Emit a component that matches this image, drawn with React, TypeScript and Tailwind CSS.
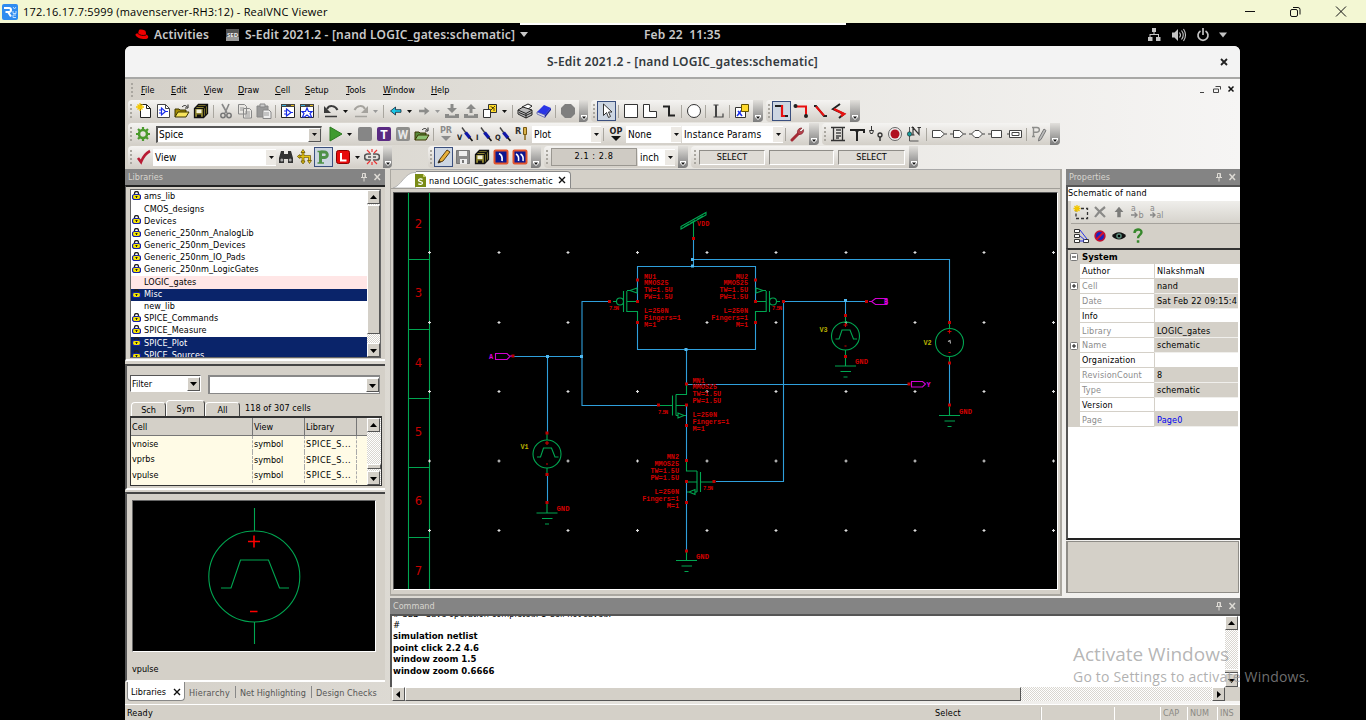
import React from 'react';

type Kids = { children?: React.ReactNode };

/* ---------- small building blocks ---------- */

const Ico = ({ children, s = 16 }: Kids & { s?: number }) => (
  <svg width={s} height={s} viewBox="0 0 16 16" fill="none" className="shrink-0">
    {children}
  </svg>
);

const Btn = ({ children, on = false }: Kids & { on?: boolean }) => (
  <div
    className={
      'flex w-[19px] shrink-0 items-center justify-center ' +
      (on ? 'h-[20px] border border-[#3a4f7e] bg-[#cdd6e2]' : 'h-[20px]')
    }
  >
    {children}
  </div>
);

const Sep = ({ w = 'w-[5px]' }: { w?: string }) => (
  <div className={'flex h-[13px] shrink-0 justify-center ' + w}>
    <div className="w-px bg-[#a9a69f]" />
  </div>
);

const Gap = ({ w }: { w: string }) => <div className={'shrink-0 ' + w} />;

const Down = ({ w = 'w-[11px]', c = '#111' }: { w?: string; c?: string }) => (
  <div className={'flex shrink-0 justify-center ' + w}>
    <svg width="5" height="3" viewBox="0 0 5 3"><path d="M0 0h5L2.500 3z" fill={c} /></svg>
  </div>
);

const Grip = ({ w = 'w-[6px]' }: { w?: string }) => (
  <div className={'flex h-[14px] shrink-0 flex-col items-center justify-between ' + w}>
    {[0, 1, 2, 3].map((i) => <i key={i} className="h-[2px] w-[2px] bg-[#aaa7a0]" />)}
  </div>
);

const More = ({ w = 'w-[10px]' }: { w?: string }) => (
  <div className={'flex h-[22px] shrink-0 items-end justify-center self-end rounded-br bg-gradient-to-b from-[#e2e0dc] to-[#7c7c7c] pb-[2px] ' + w}>
    <svg width="6" height="5" viewBox="0 0 6 5"><path d="M0 0h6v2L3 5 0 2z" fill="#fff" /><path d="M1 1.500h4L3 4z" fill="#111" /></svg>
  </div>
);

const Bar = ({ children }: Kids) => (
  <div className="flex h-[22px] shrink-0 items-center rounded-sm bg-gradient-to-b from-[#f5f4f2] to-[#d3cfc8]">{children}</div>
);

const FlatCombo = ({ w, t, track = '' }: { w: string; t: string; track?: string }) => (
  <div className={'flex h-[17px] shrink-0 items-center bg-white pl-[2px] text-[10px] ' + w}>
    <span className={'grow whitespace-nowrap ' + track}>{t}</span>
    <div className="flex h-[15px] w-[10px] shrink-0 items-center justify-center bg-[#ece9e4]"><Down w="w-[5px]" /></div>
  </div>
);

const Arrow = ({ d }: { d: 'up' | 'down' | 'left' | 'right' }) => {
  const p = { up: 'M0 5h7L3.500 1z', down: 'M0 2h7L3.500 6z', left: 'M5 0v7L1 3.500z', right: 'M2 0v7L6 3.500z' }[d];
  return (
    <div className="flex h-[14px] w-[13px] shrink-0 items-center justify-center border border-t-white border-r-[#555] border-b-[#555] border-l-white bg-[#d4d0c8]">
      <svg width="7" height="7" viewBox="0 0 7 7"><path d={p} fill="#000" /></svg>
    </div>
  );
};

const dither =
  'bg-[repeating-conic-gradient(#fff_0_25%,#d9d6d0_0_50%)] bg-[length:2px_2px]';

const PanelTitle = ({ t }: { t: string }) => (
  <div className="flex h-[16px] shrink-0 items-center bg-[#848484] pl-[3px] text-[9px] text-[#d8d5cf]">
    <span className="grow pt-[2px]">{t}</span>
    <svg width="8" height="10" viewBox="0 0 8 10" className="mr-[5px]"><path d="M2.500 1.500h3v4h-3zM1 5.500h6M4 6v3.500M5 1.500v4" stroke="#dedbd5" fill="none" /></svg>
    <svg width="9" height="8" viewBox="0 0 9 8" className="mr-[3px]"><path d="M1.500 1l5.500 6M7 1L1.500 7" stroke="#dedbd5" strokeWidth="1.500" /></svg>
  </div>
);

/* ---------- toolbar icons ---------- */

const Pen = ({ l }: { l: string }) => (
  <Ico>
    <path d="M5 1.500l5 7" stroke="#444" strokeWidth="1.400" /><path d="M8.500 6.500l4.500 5.500" stroke="#1018a8" strokeWidth="3.400" />
    <path d="M12.500 11.500l3 3.500" stroke="#111" strokeWidth="1.600" />
    <text x="0" y="14" fontSize="7.500" fontWeight="700" fill="#222">{l}</text>
  </Ico>
);
const Folder = ({ a = '#f7e45b', b = '#a38b00' }: { a?: string; b?: string }) => (
  <Ico>
    <path d="M1 14V6h4l1 1h6v2" fill={b} stroke="#3a3500" /><path d="M1 14l3-5h11l-3 5z" fill={a} stroke="#3a3500" />
    <path d="M8 4c2-2 4-2 5 0M14 1.500V5h-3" stroke="#222" />
  </Ico>
);
const Stack = () => (
  <Ico>
    <path d="M5.500 1.500h9v9l-4 4h-9v-9z" fill="#8f8630" stroke="#111" strokeWidth="1.300" />
    <path d="M3.500 3.500h9v9M1.500 5.500h9v9M12.500 3.500l2-2M10.500 5.500l2-2" stroke="#111" strokeWidth="1.200" />
    <path d="M3.500 6.500h5V10h-5z" fill="#f3f1dc" /><path d="M4 11.500h4v2.500H4z" fill="#111" />
  </Ico>
);
const Win = ({ star = false }: { star?: boolean }) => (
  <Ico>
    <path d="M1.500 1.500h13v13h-13z" fill="#fff" stroke="#222" /><path d="M1 1h14v3H1z" fill="#444" /><path d="M2 2h4v1H2z" fill="#3ab0d8" /><path d="M11 2h3v1h-3z" fill="#e8c020" />
    {star ? <path d="M8 5l1.500 3.500h3.500L11 10.500l1.500 3.500h-2L8 12l-2.500 2h-2L5 10.500 3 8.500h3.500z" stroke="#1a2ee8" strokeWidth="1.200" /> : <path d="M6.500 6v7l4.500-3.500zM4 8h2M4 11h2M11 9.500h2" stroke="#1a2ee8" strokeWidth="1.200" />}
  </Ico>
);
const Arr = ({ flip = false, c }: { flip?: boolean; c: string }) => (
  <Ico><g transform={flip ? 'translate(16 0) scale(-1 1)' : undefined}><path d="M2.500 8l5-4v2.700H13v2.600H7.500V12z" fill={c} stroke={flip ? 'none' : '#123'} strokeWidth=".8" /></g></Ico>
);
const Undo = ({ c, flip = false }: { c: string; flip?: boolean }) => (
  <Ico><g transform={flip ? 'translate(16 0) scale(-1 1)' : undefined}><path d="M4 6c2-4 8-4 10.500 1" stroke={c} strokeWidth="2" /><path d="M1 3v7h7z" fill={c} /><path d="M2 13.500h12" stroke={c} strokeWidth="1.500" /></g></Ico>
);
const Tray = ({ up = false }: { up?: boolean }) => (
  <Ico><path d={up ? 'M8 1l5 5h-3.500v4h-3V6H3z' : 'M8 10L3 5h3.500V1h3v4H13z'} fill="#8a8a88" /><path d="M1 11h4v1.500h6V11h4v4H1z" fill="#8a8a88" /></Ico>
);
const Sq = ({ c, t = '', tc = '#fff' }: { c: string; t?: string; tc?: string }) => (
  <Ico><rect x="1" y="1" width="14" height="14" rx="2" fill={c} />
    <text x="8" y="12.500" textAnchor="middle" fontSize="12" fontWeight="700" fill={tc} className="font-['Roboto',sans-serif] [font-stretch:normal]">{t}</text></Ico>
);
const Moon = ({ two = false }: { two?: boolean }) => (
  <Ico><rect x="1.500" y="1.500" width="13" height="13" rx="1" fill="#0c1690" stroke="#e2542c" strokeWidth="2" />
    {two ? <path d="M4 5c2 1 3 4 2.500 7M8.500 5c2 1 3 4 2.500 7" stroke="#fff" strokeWidth="1.600" /> : <path d="M6 4.500c2.500 1 3.500 4 3 7.500" stroke="#fff" strokeWidth="1.800" />}</Ico>
);
const Port = ({ d }: { d: string }) => <Ico><path d={d} stroke="#444" fill="#fff" /></Ico>;

/* ---------- toolbars ---------- */

const Row1 = () => (
  <div className="flex h-[23px] pl-[3px]">
    <Bar>
      <Grip w="w-[6px]" />
      <Btn><Ico><path d="M4.500 1.500h6l4 4v9h-10z" fill="#fff" stroke="#222" /><path d="M10.500 1.500v4h4" stroke="#222" /><path d="M4 0v8M0 4h8M1.500 1.500l5 5M6.500 1.500l-5 5" stroke="#f2c600" strokeWidth="1.300" /></Ico></Btn>
      <Btn><Ico><path d="M2.500 1.500h8l4 4v9h-12z" fill="#fff" stroke="#444" /><path d="M10.500 1.500v4h4" stroke="#444" /><path d="M6.500 5v7l4-3.500zM4 7h2M4 10h2M11 8.500h2" stroke="#1a2ee8" strokeWidth="1.200" /></Ico></Btn>
      <Btn><Folder /></Btn>
      <Btn><Stack /></Btn>
      <Sep w="w-[6px]" />
      <Btn><Ico><path d="M4 1l5 9M11 1L7 10" stroke="#888" strokeWidth="1.600" /><circle cx="5" cy="12.500" r="2.200" stroke="#777" strokeWidth="1.500" /><circle cx="11" cy="12.500" r="2.200" stroke="#777" strokeWidth="1.500" /></Ico></Btn>
      <Btn><Ico><path d="M1.500 1.500h6l2 2V11h-8zM6.500 5.500h6l2 2V15h-8z" fill="#e9e7e3" stroke="#888" /><path d="M3 5h4M3 7h3M8 9h5M8 11h5M8 13h5" stroke="#999" /></Ico></Btn>
      <Btn><Ico><path d="M1 3h11v11H1z" fill="#999" stroke="#888" /><path d="M4 1h5v3H4z" fill="#ccc" stroke="#888" /><path d="M7 7h6l2 2v6.500H7z" fill="#eee" stroke="#888" /><path d="M8 10h5M8 12h5" stroke="#999" /></Ico></Btn>
      <Sep />
      <Btn><Win /></Btn>
      <Btn><Win star /></Btn>
      <Sep />
      <Btn><Undo c="#3b3b3b" /></Btn><Down />
      <Btn><Undo c="#a5a39e" flip /></Btn><Down c="#999" />
      <Sep />
      <Btn><Arr c="#19c8e8" /></Btn><Down w="w-[9px]" />
      <Btn><Arr c="#8c8c8a" flip /></Btn><Down w="w-[9px]" c="#999" />
      <Btn><Tray /></Btn><Btn><Tray up /></Btn>
      <Btn><Ico><path d="M6.500 1.500h8v8h-8z" fill="#ffdb2b" stroke="#333" /><path d="M8 8l5-5M8.500 3.500l3 1.500M12 5v3" stroke="#554400" /><path d="M1.500 6.500h7v8h-7z" fill="#fff" stroke="#333" /></Ico></Btn>
      <Down />
      <Sep />
      <Btn><Ico><path d="M5 4l6-3 4 2-5 4z" fill="#fff" stroke="#222" /><path d="M1 7l5-3 9 3v5l-6 3-8-4z" fill="#bbb" stroke="#222" /><path d="M1 7l8 3.500L15 7M9 10.500V15M2 9.500l7 3 6-3" stroke="#222" /></Ico></Btn>
      <Btn><Ico><path d="M1 9l7-7 7 3-6 7z" fill="#2a35e6" /><path d="M1 9v2l8 3.500V12z" fill="#dde" stroke="#333a99" strokeWidth=".6" /><path d="M9 12l6-7v2l-6 7.500z" fill="#1a229c" /></Ico></Btn>
      <Sep />
      <Btn><Ico><path d="M5 1h6l4 4v6l-4 4H5l-4-4V5z" fill="#7f7f7f" /></Ico></Btn>
      <Gap w="w-[2px]" />
      <More w="w-[9px]" />
    </Bar>
    <Gap w="w-[3px]" />
    <Bar>
      <Grip />
      <Btn on><Ico><path d="M4.500 1v11.500l3-3 2 5 2-1-2-4.500h3.500z" fill="#fff" stroke="#333" /></Ico></Btn>
      <Sep />
      <Btn><Ico><path d="M1.500 1.500h13v13h-13z" fill="#fff" stroke="#333" /></Ico></Btn>
      <Btn><Ico><path d="M1.500 1.500h6v7h7v6h-13z" fill="#fff" stroke="#333" /></Ico></Btn>
      <Btn><Ico><path d="M2 3.500h6v9h6" stroke="#222" strokeWidth="2" /></Ico></Btn>
      <Sep w="w-[6px]" />
      <Btn><Ico><circle cx="8" cy="8" r="6.500" fill="#fff" stroke="#333" /></Ico></Btn>
      <Sep />
      <Btn><Ico><path d="M3.500 2h5M3.500 14h10M13 14.500v-4" stroke="#444" strokeWidth="1.200" /><path d="M6 2v12" stroke="#444" strokeWidth="2" /></Ico></Btn>
      <Sep />
      <Btn><Ico><path d="M1.500 4.500h10v10h-10z" fill="#fff" stroke="#333" /><path d="M3 13l8-10M4 8l4 5" stroke="#1a2ee8" strokeWidth="1.500" /><path d="M7.500 1.500h7v7h-7z" fill="#ffd92b" stroke="#665500" /></Ico></Btn>
      <Gap w="w-[2px]" />
      <More />
    </Bar>
    <Gap w="w-[3px]" />
    <Bar>
      <Grip />
      <Btn on><Ico><path d="M1 3h7v10h6" stroke="#222" strokeWidth="2" /><path d="M7 3h1v10h3" stroke="#e81010" strokeWidth="2.200" /></Ico></Btn>
      <Btn><Ico><path d="M2 3.500h11v9" stroke="#e81010" strokeWidth="2" /><circle cx="2.500" cy="3" r="2" fill="#222" /><circle cx="13" cy="13" r="2" fill="#222" /></Ico></Btn>
      <Btn><Ico><path d="M2 3h2l8 10h3" stroke="#222" strokeWidth="2" /><path d="M4 3.500l8 9" stroke="#e81010" strokeWidth="2" /></Ico></Btn>
      <Btn><Ico><path d="M9 1L2 6l11 5-5 4" stroke="#222" strokeWidth="2" /><path d="M3 6l10 5-3 2" stroke="#e81010" strokeWidth="2.400" /></Ico></Btn>
      <Gap w="w-[2px]" />
      <More />
    </Bar>
  </div>
);

const Row2 = () => (
  <div className="flex h-[23px] pl-[3px]">
    <Bar>
      <Grip w="w-[5px]" />
      <Btn><Ico><circle cx="8" cy="8" r="4" stroke="#4a9a2c" strokeWidth="2.600" /><path d="M8 1v3M8 12v3M1 8h3M12 8h3M3 3l2 2M11 11l2 2M13 3l-2 2M5 11l-2 2" stroke="#4a9a2c" strokeWidth="2.200" /></Ico></Btn>
      <Gap w="w-[4px]" />
      <div className="flex h-[17px] w-[166px] items-center border border-t-2 border-l-2 border-[#dedbd5] border-t-[#555] border-l-[#555] bg-white pl-[1px] text-[10px]">
        <span className="grow">Spice</span>
        <div className="flex h-[14px] w-[13px] items-center justify-center border border-t-white border-r-[#555] border-b-[#555] border-l-white bg-[#d4d0c8]"><Down w="w-[7px]" /></div>
      </div>
      <Gap w="w-[3px]" />
      <Btn><Ico><path d="M3 1l12 7L3 15z" fill="#3f9a2f" stroke="#2c7a20" /></Ico></Btn><Down />
      <Btn><Sq c="#868686" /></Btn><Btn><Sq c="#5a2a82" t="T" /></Btn><Btn><Sq c="#8e8e8c" t="W" tc="#e6e6e6" /></Btn>
      <Btn><Folder a="#8cc070" b="#578a3a" /></Btn>
      <Sep />
      <Btn><Ico><text x="8" y="7" textAnchor="middle" fontSize="9" fontWeight="700" fill="#8c8c8c">PR</text><path d="M3 10h10l-5 5z" fill="#8c8c8c" /></Ico></Btn>
      <Btn><Pen l="V" /></Btn><Btn><Pen l="I" /></Btn><Btn><Pen l="Q" /></Btn>
      <Btn><Ico><text x="1" y="8" fontSize="9" fontWeight="700" fill="#333">R</text><path d="M11 2v12" stroke="#8a6a1a" strokeWidth="1.500" /><path d="M9.500 1.500h3v7h-3z" fill="#d9b24a" stroke="#7a5a10" /></Ico></Btn>
      <Gap w="w-[1px]" />
      <FlatCombo w="w-[69px]" t="Plot" />
      <Sep />
      <Btn><Ico><text x="8" y="7.500" textAnchor="middle" fontSize="9" fontWeight="700" fill="#222">OP</text><path d="M3 10h10l-5 5z" fill="#111" /></Ico></Btn>
      <Gap w="w-[1px]" />
      <FlatCombo w="w-[55px]" t="None" />
      <Gap w="w-[1px]" />
      <FlatCombo w="w-[101px]" t="Instance Params" track="tracking-[0.200px]" />
      <Sep />
      <Btn><Ico><path d="M2 14l7-7" stroke="#a52a35" strokeWidth="3" strokeLinecap="round" /><path d="M13.500 3.500L11 6 9.500 4.500 12 2a4 4 0 0 0-4.500 5L9 8.500a4 4 0 0 0 4.500-5z" fill="#b7404a" stroke="#7c1d28" strokeWidth=".6" /></Ico></Btn>
      <Gap w="w-[2px]" />
      <More />
    </Bar>
    <Gap w="w-[3px]" />
    <Bar>
      <Grip />
      <Btn><Ico><path d="M1 1.500h14M1 14.500h14M3.500 1.500v13M12.500 1.500v13" stroke="#333" strokeWidth="1.300" /><path d="M6 4h5M6 7h5M6 10h5M6 12h3" stroke="#444" strokeWidth="1.500" /></Ico></Btn>
      <Btn><Ico><path d="M1 4h14v3M8 4v11" stroke="#222" strokeWidth="2" /><path d="M5 3h6l-3 5z" fill="#222" /></Ico></Btn>
      <Btn><Ico><path d="M3.500 0v5M1.500 4.500h4l-1 3h-2z" stroke="#333" /><circle cx="12" cy="9" r="2" stroke="#333" strokeWidth="1.300" /><path d="M12 11v4" stroke="#333" strokeWidth="1.500" /></Ico></Btn>
      <Btn><Ico><circle cx="8" cy="8" r="6.500" fill="#eee" stroke="#666" /><circle cx="8" cy="8" r="4.500" fill="#b01020" /></Ico></Btn>
      <Btn><Ico><path d="M7 9V1.500l6 7V1M5.500 1.500H8M5.500 9h3M11.500 1.500H15" stroke="#333" strokeWidth="1.200" /><path d="M3.500 1v14h9" stroke="#555" /><circle cx="3.500" cy="8" r="2.200" fill="#149c9c" stroke="#222" strokeWidth=".6" /></Ico></Btn>
      <Sep w="w-[6px]" />
      <Btn><Port d="M1.500 4.500h8l4 3.500-4 3.500h-8zM13.500 8H16" /></Btn>
      <Btn><Port d="M3.500 4.500h6l4 3.500-4 3.500h-6zM0 8h3.500M13.500 8H16" /></Btn>
      <Btn><Port d="M6 4.500h4l3.500 3.500-3.500 3.500H6L2.500 8zM0 8h2.500M13.500 8H16" /></Btn>
      <Btn><Port d="M3.500 4.500h10v7h-10zM0 8h3.500" /></Btn>
      <Btn><Port d="M2.500 4.500h12v7h-12zM5 6.500h7v3H5zM0 8h2.500" /></Btn>
      <Sep />
      <Btn><Ico><path d="M2.500 10.500V1.500h3.500a2.300 2.300 0 0 1 0 4.700H3M1 1.500h2M1 10.500h3" stroke="#8d8d8b" strokeWidth="1.400" /><path d="M13 3l-5 9-.5 3 2.500-1.500 5-9z" fill="#bbb" stroke="#777" /></Ico></Btn>
      <Gap w="w-[2px]" />
      <More />
    </Bar>
  </div>
);

const Field = ({ w, t = '' }: { w: string; t?: string }) => (
  <div className={'flex h-[15px] shrink-0 items-center justify-center border border-t-[#8f8d88] border-r-white border-b-white border-l-[#8f8d88] bg-[#dedbd5] text-[9px] ' + w}><span className="pt-[2px]">{t}</span></div>
);

const Row3 = () => (
  <div className="flex h-[23px] pl-[3px]">
    <Bar>
      <Grip w="w-[6px]" />
      <Btn><Ico><path d="M2 9l3 4c2-5 5-9 9-11" stroke="#b81c34" strokeWidth="2.600" /></Ico></Btn>
      <FlatCombo w="w-[123px]" t="View" />
      <Btn><Ico><path d="M3 2h3v3h4V2h3l2 7v5h-5v-4H6v4H1V9z" fill="#333" /><circle cx="3.800" cy="11" r="1.500" fill="#aaa" /><circle cx="12.200" cy="11" r="1.500" fill="#aaa" /></Ico></Btn>
      <Btn><Ico><path d="M6 2v12M1.500 7.500h11V13" stroke="#5a4a00" strokeWidth="2.600" /><path d="M6 2v12M1.500 7.500h11V13" stroke="#e6c313" strokeWidth="1.400" /><path d="M4 3.500h4L6 .500zM3 5.500v4L.3 7.500zM4 12h4l-2 3zM10.500 11.500h4l-2 3z" fill="#f2cf16" stroke="#5a4a00" strokeWidth=".7" /></Ico></Btn>
      <Btn on><Ico><path d="M4.500 2v12M4.500 3h4a2.700 2.700 0 0 1 0 5.500h-4" stroke="#4f9149" strokeWidth="3" /><path d="M1.500 2.500h6M1.500 14h6.500" stroke="#4f9149" strokeWidth="1.600" /></Ico></Btn>
      <Btn><Ico><rect x="1.500" y="1.500" width="13" height="13" rx="2" fill="#e80c0c" stroke="#8a0000" /><path d="M6 4v7.500h5.500" stroke="#fff" strokeWidth="2" /></Ico></Btn>
      <Down w="w-[10px]" />
      <Btn><Ico><path d="M7 5H3.500a3 3 0 0 0 0 6H7M9 5h3.500a3 3 0 0 1 0 6H9M4 8h3M9 8h3" stroke="#555" strokeWidth="1.700" /><path d="M3 1l3 3M8 0v3M13 1l-3 3M3 15l3-3M8 16v-3M13 15l-3-3" stroke="#e33" strokeWidth="1.200" /></Ico></Btn>
      <Gap w="w-[2px]" />
      <More w="w-[9px]" />
    </Bar>
    <Gap w="w-[36px]" />
    <Bar>
      <Grip />
      <Btn on><Ico><path d="M2 14l2-4 7-9 3 2-7 9z" fill="#e8b13a" stroke="#5a3d10" /><path d="M2 14l1-3 2 2z" fill="#222" /></Ico></Btn>
      <Btn><Ico><path d="M1.500 1.500h13v13h-13z" fill="#8c8c8c" stroke="#777" /><path d="M4 2h8v5H4zM5 10h7v5H5z" fill="#eee" /><path d="M7 11h2v3H7z" fill="#777" /></Ico></Btn>
      <Btn><Stack /></Btn>
      <Btn><Moon /></Btn><Btn><Moon two /></Btn>
      <Gap w="w-[2px]" />
      <More />
    </Bar>
    <Gap w="w-[3px]" />
    <Bar>
      <Grip /><Gap w="w-[1px]" />
      <div className="flex h-[18px] w-[86px] items-center justify-center border border-[#9a9791] bg-[#cfcbc4] text-[9px] tracking-[0.600px]">2.1 : 2.8</div>
      <Gap w="w-[1px]" />
      <FlatCombo w="w-[37px]" t="inch" />
      <Gap w="w-[3px]" />
      <More />
    </Bar>
    <Gap w="w-[3px]" />
    <Bar>
      <Grip w="w-[7px]" /><Gap w="w-[1px]" />
      <Field w="w-[66px]" t="SELECT" /><Gap w="w-[4px]" />
      <Field w="w-[65px]" /><Gap w="w-[4px]" />
      <Field w="w-[67px]" t="SELECT" /><Gap w="w-[4px]" />
      <More w="w-[9px]" />
    </Bar>
  </div>
);

/* ---------- left column ---------- */

const libs: [string, boolean, string][] = [
  ['ams_lib', true, ''],
  ['CMOS_designs', false, ''],
  ['Devices', true, ''],
  ['Generic_250nm_AnalogLib', true, ''],
  ['Generic_250nm_Devices', true, ''],
  ['Generic_250nm_IO_Pads', true, ''],
  ['Generic_250nm_LogicGates', true, ''],
  ['LOGIC_gates', false, 'bg-[#ffe6e6]'],
  ['Misc', true, 'bg-[#0a246a] text-white'],
  ['new_lib', false, ''],
  ['SPICE_Commands', true, ''],
  ['SPICE_Measure', true, ''],
  ['SPICE_Plot', true, 'bg-[#0a246a] text-white'],
  ['SPICE_Sources', true, 'bg-[#0a246a] text-white'],
];

const Lock = () => (
  <svg width="9" height="9" viewBox="0 0 9 9" className="mb-[3px]"><path d="M2.500 4V2.500a2 2 0 0 1 4 0V4" fill="none" stroke="#222" strokeWidth="1.300" /><rect x=".5" y="3.500" width="8" height="5" rx="2" fill="#f4e400" stroke="#1420a8" strokeWidth="1.200" /><path d="M3.500 5.500h2M4.500 5.500V7" stroke="#222" /></svg>
);

const Tab = ({ t, on = false, w }: { t: string; on?: boolean; w: string }) => (
  <div className={'flex items-center justify-center rounded-t-sm border border-b-0 border-t-white border-r-[#444] border-l-white bg-[#d4d0c8] pt-[2px] ' + (on ? 'h-[16px] ' : 'h-[14px] ') + w}>{t}</div>
);

const Left = () => (
  <div className="flex w-[260px] shrink-0 flex-col">
    <PanelTitle t="Libraries" />
    <div className="flex h-[176px] flex-col border-t-2 border-b-2 border-l border-t-[#222] border-b-white border-l-[#555] bg-[#d4d0c8] pt-[2px] pr-[4px] pl-[4px]">
      <div className="flex h-[169px] overflow-hidden border border-[#666]">
        <div className="min-w-0 grow bg-white pt-[1px]">
          {libs.map(([t, lock, c]) => (
            <div key={t} className={'flex h-[12.200px] items-center pl-[1px] text-[9px] ' + c}>
              <span className="flex w-[12px]">{lock && <Lock />}</span>
              <span className="whitespace-nowrap tracking-[0.080px]">{t}</span>
            </div>
          ))}
        </div>
        <div className={'flex w-[13px] flex-col ' + dither}>
          <Arrow d="up" />
          <div className="mt-px h-[129px] border border-t-white border-r-[#555] border-b-[#555] border-l-white bg-[#d4d0c8]" />
          <div className="grow" />
          <Arrow d="down" />
        </div>
      </div>
    </div>

    <div className="mt-[3px] flex h-[126px] flex-col border-t-2 border-b-2 border-l-2 border-t-[#444] border-b-white border-l-[#555] bg-[#d4d0c8] pr-[3px] pl-[3px] text-[9px]">
      <div className="mt-[9px] flex h-[19px]">
        <div className="mr-[7px] flex h-[17px] w-[71px] items-center border border-t-[#555] border-r-white border-b-white border-l-[#555] bg-white pl-[1px]">
          <span className="grow pt-[3px]">Filter</span><Arrow d="down" />
        </div>
        <div className="flex w-[172px] items-center justify-end border border-t-2 border-l-2 border-[#888] bg-white">
          <Arrow d="down" />
        </div>
      </div>
      <div className="mt-[6px] flex h-[16px] items-end pl-[1px]">
        <Tab t="Sch" w="w-[35px]" /><Tab t="Sym" on w="w-[39px]" /><Tab t="All" w="w-[35px]" />
        <span className="self-center pt-[2px] pl-[5px] tracking-[0.080px]">118 of 307 cells</span>
      </div>
      <div className="flex h-[70px] overflow-hidden border border-t-2 border-[#333] bg-[#fffbe6]">
        <div className="min-w-0 grow">
          <div className="flex h-[18px] items-center border-b border-[#777] bg-[#d4d0c8]">
            <span className="w-[121px] pt-[2px] pl-[1px]">Cell</span>
            <span className="h-full w-[52px] border-l border-[#777] pt-[3px] pl-[1px]">View</span>
            <span className="h-full w-[53px] border-r border-l border-[#777] pt-[3px] pl-[1px]">Library</span>
          </div>
          {['vnoise', 'vprbs', 'vpulse'].map((n) => (
            <div key={n} className="flex h-[15.700px] items-center">
              <span className="w-[121px] pt-[1px] pl-[1px]">{n}</span>
              <span className="h-full w-[52px] border-l border-dashed border-[#aaa] pt-[2px] pl-[1px]">symbol</span>
              <span className="h-full w-[53px] border-r border-l border-dashed border-[#aaa] pt-[2px] pl-[1px] tracking-[0.500px]">SPICE_S...</span>
            </div>
          ))}
        </div>
        <div className={'flex w-[14px] flex-col ' + dither}>
          <Arrow d="up" />
          <div className="grow" />
          <div className="h-[5px] border border-t-white border-r-[#555] border-b-[#555] border-l-white bg-[#d4d0c8]" />
          <div className="h-[2px]" />
          <Arrow d="down" />
        </div>
      </div>
    </div>

    <div className="mt-[2px] flex h-[190px] flex-col border-t-2 border-b-2 border-l-2 border-t-[#444] border-b-white border-l-[#555] bg-[#d4d0c8] pt-[6px] pl-[5px]">
      <div className="h-[152px] w-[244px] border border-t-[#666] border-r-white border-b-white border-l-[#666] bg-black">
        <svg width="242" height="150" viewBox="133 501 242 150" fill="none" stroke="#00a651" strokeWidth="1.100">
          <path d="M254.500 508v23M254.500 622v22" />
          <circle cx="254.300" cy="576.500" r="45.500" />
          <path d="M221 588h10l9.500-28h28l11 28H289" />
          <path d="M248 541.500h12M254 535.500v12M250 611.500h7.500" stroke="#f00" strokeWidth="1.600" />
        </svg>
      </div>
      <span className="mt-[11px] text-[9px]">vpulse</span>
    </div>

    <div className="flex h-[22px] items-start text-[9px] text-[#555]">
      <div className="ml-[2px] flex h-[19px] w-[58px] items-center justify-between rounded-b-sm border border-t-0 border-[#888] bg-white pt-[4px] pr-[3px] pl-[3px] text-black">
        Libraries
        <svg width="8" height="8" viewBox="0 0 8 8" className="mb-[3px]"><path d="M1 1l6 6M7 1L1 7" stroke="#111" strokeWidth="1.400" /></svg>
      </div>
      <span className="ml-[4px] w-[46px] pt-[5px] tracking-[0.200px]">Hierarchy</span>
      <span className="mt-[4px] h-[12px] border-l border-[#888]" />
      <span className="w-[75px] pt-[5px] pl-[4px] whitespace-nowrap">Net Highlighting</span>
      <span className="mt-[4px] h-[12px] border-l border-[#888]" />
      <span className="pt-[5px] pl-[4px] tracking-[0.080px] whitespace-nowrap">Design Checks</span>
    </div>
  </div>
);

/* ---------- schematic ---------- */

const G = '#00a651';
const R = '#d00000';
const W = '#2f9fdc';

const Gnd = ({ x, y }: { x: number; y: number }) => (
  <g stroke={G}>
    <path d={`M${x} ${y - 9}V${y}M${x - 10.5} ${y}h21M${x - 5} ${y + 5.5}h10.500M${x - 2} ${y + 11}h4`} />
    <text x={x + 9.5} y={y - 2} textLength="13" lengthAdjust="spacingAndGlyphs" fill={R} stroke="none" fontSize="6.500">GND</text>
  </g>
);

const Source = ({ x, y, pulse = true }: { x: number; y: number; pulse?: boolean }) => (
  <g stroke={G}>
    <circle cx={x} cy={y} r="14" />
    <path d={`M${x} ${y - 20}v6M${x} ${y + 14}v7`} />
    {pulse ? <path d={`M${x - 10} ${y + 3}h3.500l3-9h8l3.500 9h3.500`} /> : <path d={`M${x - 1.5} ${y - 1}l2-1 .5 3`} stroke="#bbb" />}
    <path d={`M${x - 2} ${y - 11}h4M${x} ${y - 13}v4M${x - 1} ${y + 10}h2`} stroke={R} />
  </g>
);

const lines = ['MU1', 'MMOS25', 'TW=1.5U', 'PW=1.5U', '', 'L=250N', 'Fingers=1', 'M=1'];
const Params = ({ x, y, name, end = false }: { x: number; y: number; name: string; end?: boolean }) => (
  <g fill={R}>
    {lines.map((t, i) => (
      <text key={i} x={x} y={y + i * 6.95} textAnchor={end ? 'end' : 'start'}>{i === 0 ? name : t}</text>
    ))}
  </g>
);

const Pmos = () => (
  <g stroke={G}>
    <path d="M623.500 291v21M626.800 291v21M627 301.500h10M627 311.500h10.500V322M613 301.500h3.500M627 290.500h3" />
    <circle cx="620" cy="301.500" r="3.500" />
    <path d="M630 290.500l7-2.500v5z" />
  </g>
);
const Nmos = () => (
  <g stroke={G}>
    <path d="M672.500 395.500v20M676 394.500v21M676 394.500h10.500V384M660 405.500h13M676 405.500h10M676 415.500h2" />
    <path d="M678 413v5l6-2.500zM684 415.500h2" />
  </g>
);

const xs = [429.5, 499, 568, 637.5, 707, 776, 846, 915, 984, 1053.5];
const ys = [252.5, 322.5, 391.5, 461, 530.5];
const pins: [number, number][] = [
  [693.5, 238.5], [637.5, 280], [637.5, 301.5], [637.5, 322.5], [609.5, 301.5], [513, 356], [547, 433], [547, 474.5], [547, 502.5],
  [658.5, 405], [686.5, 384], [686.5, 405], [686.5, 425.5], [686.5, 460.5], [686.5, 481.5], [686.5, 502.5], [686.5, 551], [714, 481.5],
  [755.5, 280], [755.5, 301.5], [755.5, 322.5], [783.5, 301.5], [866.5, 301.5], [845.5, 315.5], [845.5, 356.5],
  [949.5, 322.5], [949.5, 363], [949.5, 405], [909, 384],
];
const nodes: [number, number][] = [[692.5, 259.5], [692.5, 266], [547.5, 356.5], [581.5, 356.5], [686, 349.5], [845.5, 300.5]];

const Schematic = () => (
  <svg width="664" height="396" viewBox="394 193 664 396" fill="none" strokeWidth="1.100" fontSize="6.800" className="font-['Liberation_Mono',monospace] font-bold [font-stretch:normal]">
    <path d="M408.500 193V590M429.500 193V590M408.500 259.500h21M408.500 329.500h21M408.500 398.500h21M408.500 467.500h21M408.500 537.500h21" stroke={G} />
    <g fill="#c80000" fontSize="13" textAnchor="middle" className="font-['DejaVu_Sans',sans-serif] font-normal [font-stretch:condensed]">
      {[2, 3, 4, 5, 6, 7].map((n, i) => <text key={n} x="418.500" y={228 + i * 69.3}>{n}</text>)}
    </g>
    <g stroke="#ddd">
      {xs.map((x) => ys.map((y) => <path key={x + '-' + y} d={`M${x - 1.5} ${y}h3M${x} ${y - 1.5}v3`} />))}
    </g>
    <g stroke={G}>
      <path d="M681 226.500l25-14v2.500l-25 14zM693.500 221V238M684 227l5-3M690 223.500l5-3M697 219.500l6-3.500" />
    </g>
    <path
      stroke={W}
      d="M693.500 240V266.500M693 259.500H949.500V322M637.500 301V266.500H755.500V301M637.500 323V349.500H755.500V323M609 301.500H582V405.500H657M514 356.500H582M547.500 356V432M547.500 475V502M686.500 349V384M686 384.500H908M686.500 405V460M686.500 481V550M716 481.500H783.500V302M785 301.500H866M845.500 301V315M949.500 364V404"
    />
    <Pmos /><g transform="translate(1393 0) scale(-1 1)"><Pmos /></g>
    <Nmos /><g transform="translate(1373 76.500) scale(-1 1)"><Nmos /></g>
    <Source x={547} y={454} /><Source x={845.5} y={336} /><Source x={949.5} y={342.5} pulse={false} />
    <Gnd x={547} y={513} /><Gnd x={845.5} y={366} /><Gnd x={949.5} y={415.5} /><Gnd x={686.5} y={560.5} />
    <g fill="#c00000">
      {pins.map(([x, y]) => <rect key={x + '.' + y} x={x - 1.5} y={y - 1.5} width="3" height="3" />)}
    </g>
    <g fill="#4fb8f0">
      {nodes.map(([x, y]) => <rect key={x + '.' + y} x={x - 1.5} y={y - 1.5} width="3" height="3" />)}
    </g>
    <g stroke="#d000d0">
      <path d="M495.500 353.500h11.500l3 3-3 3h-11.500zM510 356h2M887 298.500h-11.500l-4 3 4 3h11.500zM869 301.500h2M911.500 381.500h11l3 2.500-3 3h-11z" />
    </g>
    <g fill="#e000e0"><text x="489" y="358.500">A</text><text x="884" y="304">B</text><text x="926.500" y="386.500">Y</text></g>
    <g fill="#b8b000"><text x="520.500" y="449">V1</text><text x="819.500" y="331.500">V3</text><text x="923.500" y="344.500">V2</text></g>
    <g fill={R}>
      <text x="697" y="226" textLength="12.500" fontSize="6.500">VDD</text>
      <text x="609" y="309.500" fontSize="5.500" textLength="10">7.5N</text><text x="772" y="309.500" fontSize="5.500" textLength="10">7.5N</text>
      <text x="658" y="414" fontSize="5.500" textLength="10">7.5N</text><text x="703" y="490" fontSize="5.500" textLength="10">7.5N</text>
    </g>
    <Params x={644} y={278.5} name="MU1" />
    <Params x={748} y={278.5} name="MU2" end />
    <Params x={692.5} y={382.5} name="MN1" />
    <Params x={679} y={459} name="MN2" end />
  </svg>
);

const Center = () => (
  <div className="flex h-[427px] w-[672px] shrink-0 flex-col border-r-2 border-b-2 border-l border-[#aaa7a0] bg-[#d4d0c8]">
    <div className="flex h-[20px] shrink-0 items-end border-b border-[#a19e98] border-t border-t-[#aaa]">
      <svg width="24" height="16" viewBox="0 0 24 16" className="ml-[1px]"><path d="M1 16C9 14 13 1 22 .500h2V16z" fill="#fff" stroke="#aaa" strokeWidth=".8" /></svg>
      <div className="flex h-[17px] w-[155px] items-center rounded-tr-sm border-t border-r border-[#888] bg-white text-[9px]">
        <svg width="11" height="13" viewBox="0 0 11 13" className="mr-[3px] ml-[-1px]"><path d="M0 0h8l3 3v10H0z" fill="#7a8c16" /><path d="M8 0v3h3z" fill="#c8d070" /><path d="M7.500 5.500c-1-1-4-.8-4 .8s4 1 4 2.600-3 1.800-4.200.8" fill="none" stroke="#fff" strokeWidth="1.300" /></svg>
        <span className="grow pt-[3px] tracking-[0.200px] whitespace-nowrap">nand LOGIC_gates:schematic</span>
        <svg width="8" height="8" viewBox="0 0 8 8" className="mr-[4px]"><path d="M1 1l6 6M7 1L1 7" stroke="#111" strokeWidth="1.400" /></svg>
      </div>
    </div>
    <div className="mx-[2px] mt-[3px] h-[398px] border border-t-[#555] border-r-white border-b-white border-l-[#555] bg-black">
      <Schematic />
    </div>
  </div>
);

/* ---------- properties ---------- */

const props: [string, string, boolean, boolean][] = [
  ['Author', 'NlakshmaN', true, false],
  ['Cell', 'nand', false, true],
  ['Date', 'Sat Feb 22 09:15:4', false, false],
  ['Info', '', true, false],
  ['Library', 'LOGIC_gates', false, false],
  ['Name', 'schematic', false, true],
  ['Organization', '', true, false],
  ['RevisionCount', '8', false, false],
  ['Type', 'schematic', false, false],
  ['Version', '', true, false],
  ['Page', 'Page0', false, false],
];

const Expander = ({ plus = false }: { plus?: boolean }) => (
  <svg width="8" height="8" viewBox="0 0 8 8"><rect x=".5" y=".5" width="7" height="7" rx="1" fill="#fff" stroke="#777" /><path d={plus ? 'M2 4h4M4 2v4' : 'M2 4h4'} stroke="#111" /></svg>
);

const Right = () => (
  <div className="flex w-[174px] shrink-0 flex-col">
    <PanelTitle t="Properties" />
    <div className="h-[16px] border-t-2 border-l-2 border-t-[#555] border-l-[#555] bg-white text-[9px] leading-[13px]"><span className="tracking-[0.180px]">Schematic of nand</span></div>
    <div className="flex h-[47px] flex-col border-l-2 border-[#555] bg-[#d4d0c8] pl-[3px]">
      <div className="flex h-[23px] items-center border-b border-[#a5a29c] bg-gradient-to-b from-[#efeeeb] to-[#d6d3cc]">
        <Btn><Ico><path d="M3 4.500h11.500v10H3z" stroke="#333" strokeWidth="1.300" strokeDasharray="3 2" /><path d="M4 1v7M.5 4.500h7M1.500 2l5 5M6.500 2l-5 5" stroke="#f2c600" strokeWidth="1.300" /></Ico></Btn>
        <Btn><Ico><path d="M3 3l10 10M13 3C9 6 5 10 3 13" stroke="#8a8a88" strokeWidth="2.200" /></Ico></Btn>
        <Btn><Ico s={14}><path d="M8 2l5 6h-3v6H6V8H3z" fill="#7c7c7a" /></Ico></Btn>
        <Btn><Ico><text x="1" y="7" fontSize="8.500" fill="#888">a</text><text x="8.500" y="14" fontSize="9" fill="#888">b</text><path d="M1 11h6M4.500 8.500L7 11l-2.500 2.500" stroke="#888" strokeWidth="1.400" /></Ico></Btn>
        <Btn><Ico><text x="1" y="7" fontSize="8.500" fill="#888">a</text><text x="7.500" y="14" fontSize="8.500" fill="#888">al</text><path d="M1 11h5M3.500 8.500L6 11l-2.500 2.500" stroke="#888" strokeWidth="1.400" /></Ico></Btn>
      </div>
      <div className="flex h-[24px] items-center">
        <Btn><Ico><path d="M1.500 1.500h5v3h-5zM1.500 6.500h5v3h-5zM1.500 11.500h5v3h-5zM10.500 11.500h5v3h-5z" fill="#fff" stroke="#333" /><path d="M7 2l7 9M7 8l5 4M7 13h4" stroke="#2a35e6" /></Ico></Btn>
        <Btn><Ico s={14}><circle cx="8" cy="8" r="5.500" fill="#1a22c0" stroke="#c01030" strokeWidth="2" /><path d="M12 4l-8 8" stroke="#d01030" strokeWidth="2.500" /></Ico></Btn>
        <Btn><Ico><path d="M1 8c3-5 11-5 14 0-3 4.500-11 4.500-14 0z" fill="#111" /><circle cx="8" cy="8" r="2.800" fill="#5a8a7a" /><circle cx="8" cy="8" r="1.300" fill="#000" /></Ico></Btn>
        <Btn><Ico><path d="M4.500 5c0-4.500 7-4.500 7-.8 0 2.800-3.500 2.500-3.500 6" stroke="#37882c" strokeWidth="2.400" /><path d="M6.800 12.300h2.500v2.500H6.800z" fill="#37882c" /></Ico></Btn>
      </div>
    </div>
    <div className="h-[292px] border-t-2 border-b-2 border-l-2 border-t-[#333] border-b-[#222] border-l-[#555] bg-white text-[9px]">
      <div className="flex h-[14px] items-center bg-[#d4d0c8]">
        <span className="flex w-[12px] pl-[2px]"><Expander /></span>
        <b className="pl-[2px] text-[9.500px]">System</b>
      </div>
      {props.map(([k, v, edit, plus]) => (
        <div key={k} className="flex h-[14.850px] items-stretch">
          <span className="flex w-[12px] shrink-0 items-center bg-[#d4d0c8] pl-[2px]">{plus && <Expander plus />}</span>
          <span className={'flex w-[74px] shrink-0 items-center border-b border-[#d4d0c8] pt-[2px] pl-[2px] tracking-[0.160px] ' + (edit ? 'text-black' : 'text-[#8c8c8c]')}>{k}</span>
          <span className={'mr-[2px] flex grow items-center overflow-hidden border-b border-l border-[#d4d0c8] pt-[2px] pl-[2px] tracking-[0.180px] whitespace-nowrap ' + (edit ? 'bg-white' : 'border-b-[#f0efec] bg-[#d4d0c8]') + (k === 'Page' ? ' text-[#0000ee]' : '')}>{v}</span>
        </div>
      ))}
    </div>
    <div className="mt-[1px] mr-[1px] h-[52px] border border-l-2 border-[#8e8c87] bg-[#d4d0c8]" />
  </div>
);

/* ---------- command log ---------- */

const Command = () => (
  <div className="flex h-[106px] w-[850px] flex-col">
    <PanelTitle t="Command" />
    <div className="flex h-[73px] border-t-2 border-l-2 border-[#555] bg-white">
      <div className="flex grow flex-col overflow-hidden pl-px text-[9.500px] leading-[11.400px]">
        <span className="-mt-[7px] text-[9px] tracking-[0.120px] whitespace-nowrap"># SED "Save operation completed. 1 Cell not saved."</span>
        <span className="-mt-[1.500px]">#</span>
        <b>simulation netlist</b><b>point click 2.2 4.6</b><b>window zoom 1.5</b><b>window zoom 0.6666</b>
      </div>
      <div className={'mr-[2px] flex w-[13px] flex-col ' + dither}>
        <Arrow d="up" /><div className="grow" />
        <div className="h-[4px] border-t border-b border-t-white border-b-[#555] bg-[#d4d0c8]" />
        <Arrow d="down" />
      </div>
    </div>
    <div className="flex h-[14px] bg-[#d4d0c8] pr-[15px] pl-[2px]">
      <Arrow d="left" />
      <div className="w-[616px] border border-t-white border-r-[#555] border-b-[#555] border-l-white bg-[#d4d0c8]" />
      <div className={'grow ' + dither} />
      <Arrow d="right" />
    </div>
  </div>
);

const menu: [string, string][] = [
  ['File', 'w-[30px]'], ['Edit', 'w-[33px]'], ['View', 'w-[34px]'], ['Draw', 'w-[37px]'], ['Cell', 'w-[30px]'],
  ['Setup', 'w-[41px]'], ['Tools', 'w-[37px]'], ['Window', 'w-[48px]'], ['Help', 'w-[30px]'],
];

export default function App() {
  return (
    <div className="relative flex h-[720px] w-[1366px] flex-col overflow-hidden bg-black font-['DejaVu_Sans_Condensed','DejaVu_Sans',sans-serif] text-black [font-stretch:condensed]">
      <div className="flex h-[23px] shrink-0 items-center bg-[#f3f7d3] font-['Open_Sans',sans-serif] text-[11px] [font-stretch:normal]">
        <svg width="16" height="16" viewBox="0 0 16 16" className="ml-[2px]"><rect width="16" height="16" rx="2" fill="#2f8cf0" /><path d="M2 4h5a2 2 0 0 1 0 4H3.500M6 8l3 4.500" fill="none" stroke="#fff" strokeWidth="2" /><path d="M11 3l1.500 2L14 3M11 7v2.500h3V7M14 11h-3v2.500h3" fill="none" stroke="#bfe0ff" /></svg>
        <span className="ml-[5px] grow pt-[2px] tracking-[0.200px] whitespace-nowrap">172.16.17.7:5999 (mavenserver-RH3:12) - RealVNC Viewer</span>
        <svg width="110" height="14" viewBox="0 0 110 14" className="mr-[17px]" fill="none" stroke="#111"><path d="M6 6.500h10M97 1.500l10 10M107 1.500l-10 10" /><rect x="51.500" y="4.500" width="7" height="7" rx="1.500" /><path d="M54 2.500h5a2 2 0 0 1 2 2v5" /></svg>
      </div>

      <div className="flex h-[23px] shrink-0 items-center pl-[135px] font-['Noto_Sans',sans-serif] text-[12px] font-semibold text-[#c9c9c9] [font-stretch:normal]">
        <svg width="14" height="11" viewBox="0 0 14 11"><path d="M4 1c2-1 4 0 6 .500 1 .500 1 3 1 4 3 1 3 4 0 4.500C7 10.500 1 8.500.500 6 .3 4.500 1.500 4.500 3 4.500z" fill="#e00" /><path d="M3 4.500c2 2 5 2.500 8 1.500" stroke="#300" fill="none" /></svg>
        <span className="ml-[5px] w-[72px] tracking-[0.150px]">Activities</span>
        <svg width="13" height="12" viewBox="0 0 13 12"><rect width="13" height="12" fill="#555" /><path d="M0 8h13v4H0z" fill="#999" /><text x="6.500" y="8" textAnchor="middle" fontSize="6" fontWeight="700" fill="#eee">SED</text></svg>
        <span className="ml-[6px] w-[275px] tracking-[0.200px] whitespace-nowrap">S-Edit 2021.2 - [nand LOGIC_gates:schematic]</span>
        <svg width="8" height="5" viewBox="0 0 8 5"><path d="M0 0h8L4 5z" fill="#c9c9c9" /></svg>
        <span className="ml-[116px] grow tracking-[0.150px] whitespace-nowrap">Feb 22&nbsp; 11:35</span>
        <svg width="82" height="14" viewBox="0 0 82 14" className="mr-[137px]" fill="#c4c4c4">
          <path d="M5 0h4v4H5zM1 9h4.500v4H1zM9 9h4.500v4H9zM6.500 4h1v2h4.500v3h-1V7H3.500v2h-1V6h4z" />
          <path d="M25 4.500h2.500L31 1v12l-3.500-3.500H25z" /><path d="M32.500 4.500q2 2.500 0 5M34.500 2.500q3.500 4.500 0 9M36.500 1q4 6 0 12" fill="none" stroke="#c4c4c4" strokeWidth="1.100" />
          <path d="M53.500 3a5 5 0 1 0 5 0M56 0v7" fill="none" stroke="#c4c4c4" strokeWidth="1.700" /><path d="M72 4.500h8l-4 5z" />
        </svg>
      </div>

      <div className="ml-[125px] flex h-[674px] w-[1115px] shrink-0 flex-col overflow-hidden rounded-t-md bg-gradient-to-r from-[#d4d0c8] via-[#e6e4df] to-[#f6f5f4]">
        <div className="flex h-[33px] shrink-0 items-center border-b-2 border-[#a8a8a6] bg-[#f3f3f3] pl-[422px] font-['Noto_Sans',sans-serif] text-[12px] font-semibold text-[#333a3e] [font-stretch:normal]">
          <span className="grow pt-[1px] tracking-[0.220px] whitespace-nowrap">S-Edit 2021.2 - [nand LOGIC_gates:schematic]</span>
          <svg width="8" height="8" viewBox="0 0 8 8" className="mr-[12px]"><path d="M1 1l6 6M7 1L1 7" stroke="#222" strokeWidth="1.800" /></svg>
        </div>
        <div className="flex h-[21px] shrink-0 items-center pl-[3px] text-[9px]">
          <Grip w="w-[7px]" />
          <Gap w="w-[6px]" />
          {menu.map(([m, w]) => (
            <span key={m} className={'shrink-0 pt-[2px] ' + w}><u>{m[0]}</u>{m.slice(1)}</span>
          ))}
          <div className="grow" />
          <svg width="38" height="9" viewBox="0 0 38 9" className="mr-[3px]" fill="none" stroke="#444"><path d="M1 7.500h4" /><path d="M16.500 1.500h5v3M14.500 4h5v3.500h-5z" /><path d="M29.500 1.500l5 5M34.500 1.500l-5 5" stroke="#111" strokeWidth="1.500" /></svg>
        </div>
        <Row1 /><Row2 /><Row3 />
        <div className="flex h-[535px] shrink-0">
          <Left />
          <div className="ml-[5px] flex w-[850px] flex-col">
            <div className="flex h-[429px] gap-[4px]"><Center /><Right /></div>
            <Command />
          </div>
        </div>
        <div className="flex h-[16px] shrink-0 items-center border-t border-white bg-[#d4d0c8] pt-[2px] pl-[2px] text-[9px]">
          <span className="w-[808px] tracking-[0.150px]">Ready</span>
          <span className="w-[105px] tracking-[0.150px]">Select</span>
          <div className="h-[13px] w-[2px] border-r border-white bg-[#c8c5be]" />
          <div className="h-[13px] w-[73px] border-r border-white" />
          <div className="h-[13px] w-[46px] border-r border-white" />
          <div className="flex h-[13px] grow items-center text-[#8b8984]">
            <span className="w-[26px] pl-[2px]">CAP</span><span className="w-[30px] border-l border-white pl-[2px]">NUM</span><span className="border-l border-white pl-[2px]">INS</span>
          </div>
        </div>
      </div>

      <div className="absolute top-[23px] left-[520px] h-[2px] w-[326px] bg-white" />
      <div className="absolute top-[641px] left-[1073px] flex flex-col font-['Open_Sans',sans-serif] whitespace-nowrap text-[#8d8d8d]/65 [font-stretch:normal]">
        <span className="text-[19px] leading-[26px]">Activate Windows</span>
        <span className="text-[14px] leading-[19px] tracking-[0.200px] text-[#969696]/75">Go to Settings to activate Windows.</span>
      </div>
    </div>
  );
}
